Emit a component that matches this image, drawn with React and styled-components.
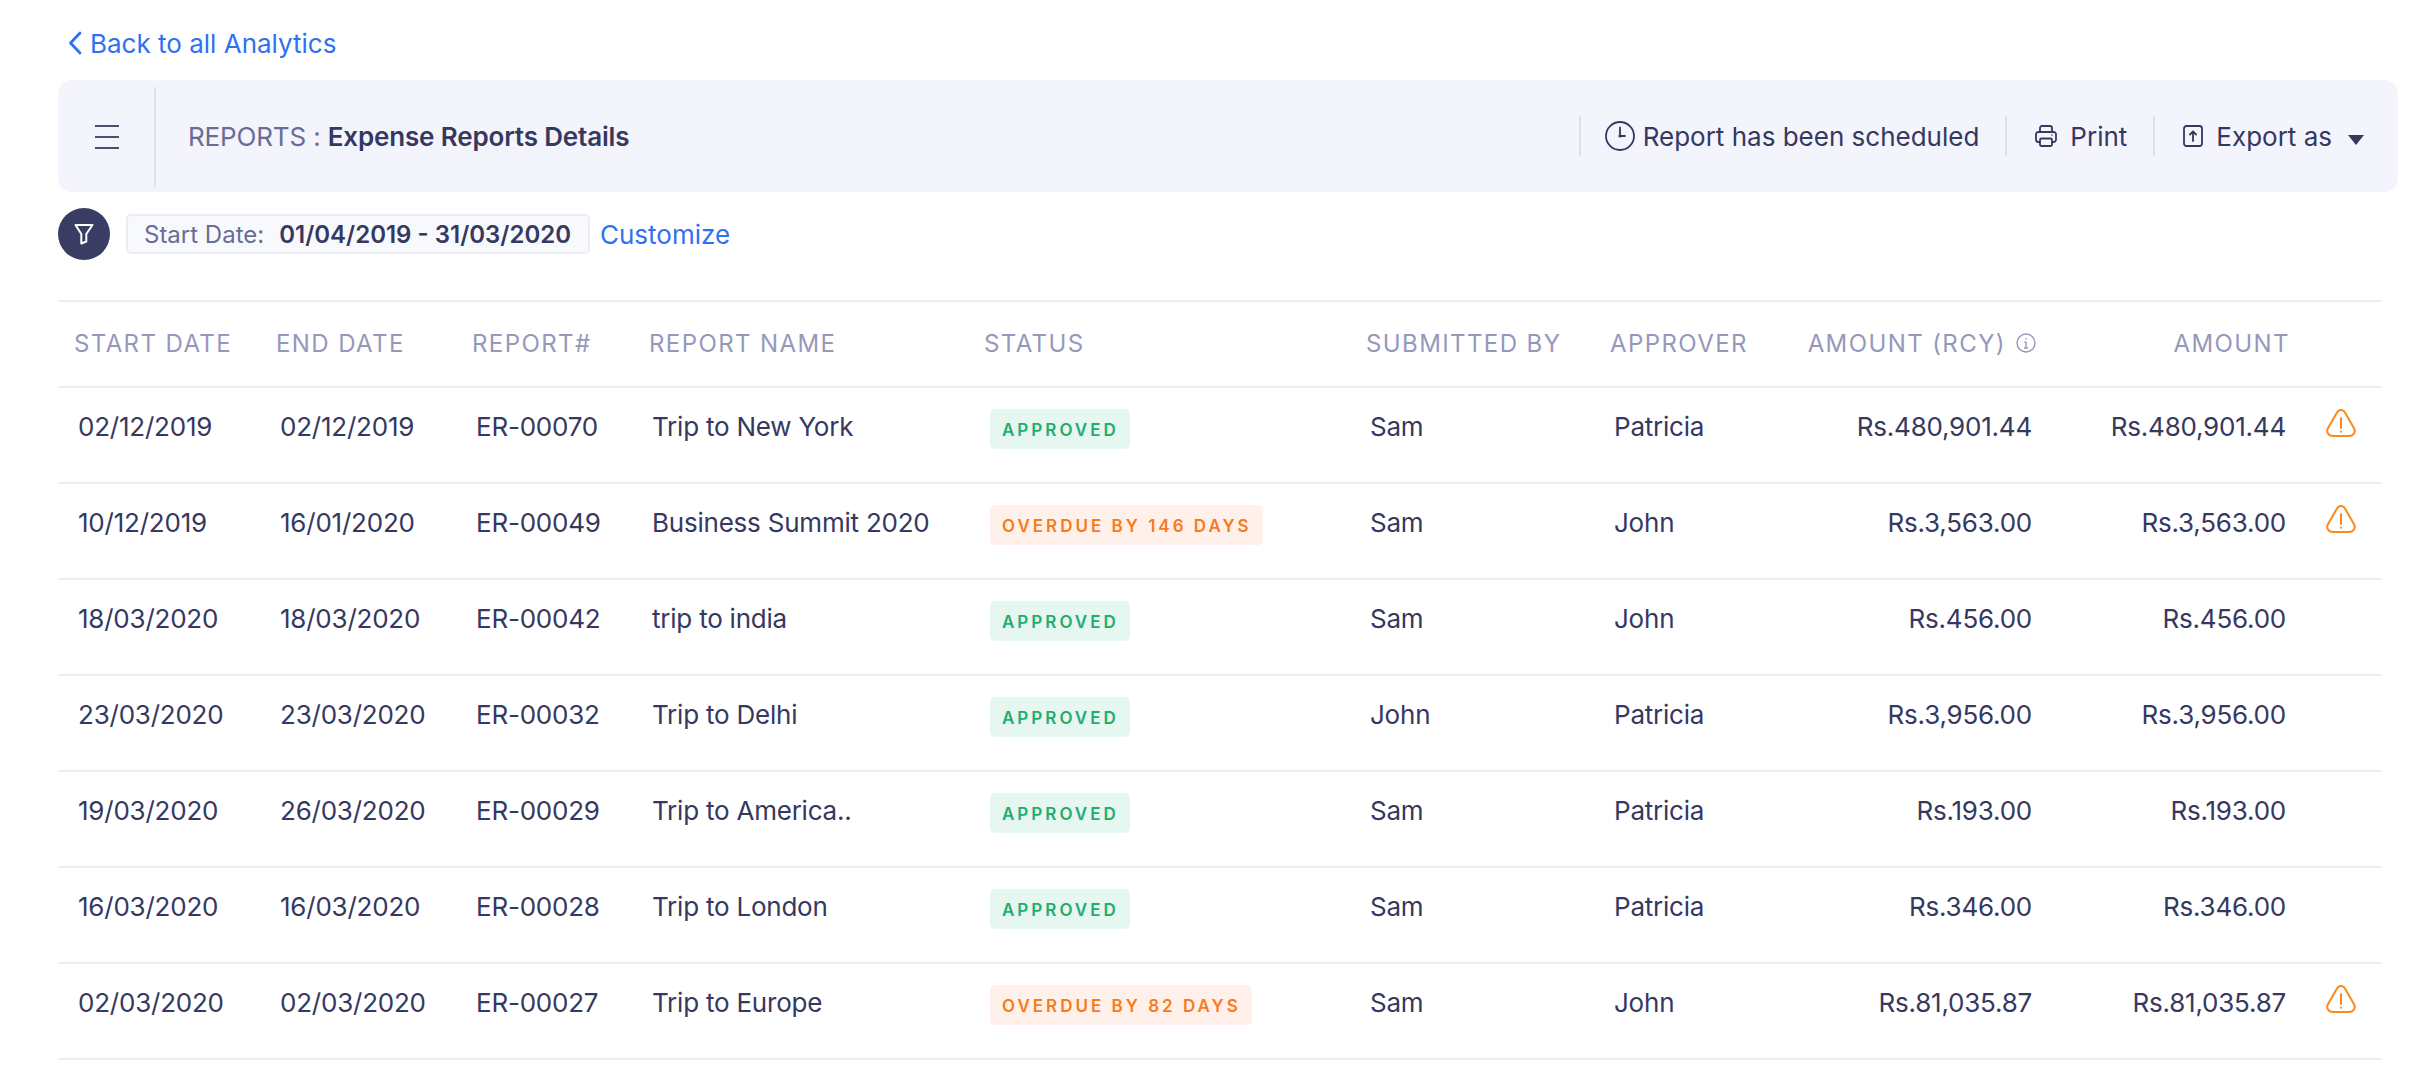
import React from "react";
import styled, { createGlobalStyle } from "styled-components";

const GlobalStyle = createGlobalStyle`
  html, body {
    margin: 0;
    background: #fff;
    font-family: Inter, "Liberation Sans", sans-serif;
    color: #35385f;
  }
`;

const Page = styled.div`
  width: 2434px;
  height: 1074px;
  box-sizing: border-box;
  overflow: hidden;
  padding: 24px 52px 0 58px;
  font-size: 26px;
`;

const BackLink = styled.a`
  display: flex;
  align-items: center;
  gap: 8px;
  height: 38px;
  margin-bottom: 18px;
  padding-left: 10px;
  color: #2f71f0;
`;

const Banner = styled.div`
  display: flex;
  align-items: center;
  height: 112px;
  background: #f3f4fc;
  border-radius: 14px;
  margin-right: -16px;
  padding: 0 26px 0 37px;
`;

const MenuButton = styled.div`
  display: flex;
  align-items: center;
  align-self: stretch;
  width: 59px;
  margin: 7px 0 5px;
  border-right: 2px solid #dfe1ee;
`;

const Title = styled.div`
  flex: 1;
  padding-left: 32px;
  letter-spacing: -0.15px;
  color: #696d95;
  strong {
    font-weight: 600;
    color: #35385f;
  }
`;

const Tool = styled.div`
  display: flex;
  align-items: center;
  gap: ${(p) => p.$gap}px;
  height: 40px;
  padding: 0 ${(p) => p.$end}px 0 ${(p) => p.$start}px;
  border-left: 2px solid #dfe1ee;
`;

const Caret = styled.span`
  width: 0;
  height: 0;
  margin: 8px 0 0 3px;
  border-style: solid;
  border-width: 10px 8px 0;
  border-color: #35385f transparent transparent;
`;

const FilterBar = styled.div`
  display: flex;
  align-items: center;
  height: 52px;
  margin-top: 16px;
`;

const FilterIcon = styled.div`
  display: flex;
  align-items: center;
  justify-content: center;
  width: 52px;
  height: 52px;
  border-radius: 50%;
  background: #3a3d63;
`;

const DateChip = styled.div`
  display: flex;
  align-items: center;
  box-sizing: border-box;
  height: 40px;
  margin: 0 10px 0 16px;
  padding: 0 17px 0 16px;
  background: #f8f9fc;
  border: 2px solid #ebecf5;
  border-radius: 5px;
  font-size: 24px;
  color: #696d95;
  strong {
    margin-left: 15px;
    font-weight: 600;
    color: #35385f;
  }
`;

const Customize = styled.a`
  color: #2f71f0;
`;

const Table = styled.table`
  width: 2324px;
  margin-top: 40px;
  table-layout: fixed;
  border-collapse: collapse;
  border-top: 2px solid #ededf8;
`;

const Th = styled.th`
  height: 86px;
  padding: 0 ${(p) => (p.$right ? "10px" : "0")} 2px ${(p) => (p.$right ? "0" : "16px")};
  border-bottom: 2px solid #ededf8;
  text-align: ${(p) => (p.$right ? "right" : "left")};
  font-size: 24px;
  font-weight: 400;
  letter-spacing: 1.4px;
  color: #9698bb;
  white-space: nowrap;
  box-sizing: border-box;
`;

const Td = styled.td`
  height: 96px;
  box-sizing: border-box;
  padding: 21px ${(p) => (p.$right ? "14px" : "0")} 0 ${(p) => (p.$right ? "0" : p.$left || "20px")};
  border-bottom: 2px solid #ededf8;
  text-align: ${(p) => (p.$right ? "right" : "left")};
  vertical-align: top;
  line-height: 36px;
  letter-spacing: -0.22px;
  white-space: nowrap;
`;

const Badge = styled.span`
  display: inline-block;
  height: 40px;
  box-sizing: border-box;
  padding: 0 11px 0 12px;
  border-radius: 5px;
  font-size: 17px;
  font-weight: 600;
  line-height: 42px;
  letter-spacing: 3px;
  background: ${(p) => (p.$overdue ? "#fff1e9" : "#e5f7f0")};
  color: ${(p) => (p.$overdue ? "#f97a1d" : "#23ad6d")};
`;

const ChevronLeft = () => (
  <svg width="14" height="24" viewBox="0 0 14 24" fill="none" stroke="#2f71f0" strokeWidth="2.8" strokeLinecap="round" strokeLinejoin="round">
    <path d="M12 2 2.500 12 12 22" />
  </svg>
);

const MenuIcon = () => (
  <svg width="24" height="26" viewBox="0 0 24 26" stroke="#4c4f74" strokeWidth="2">
    <path d="M0 2h24M0 13h24M0 24h24" />
  </svg>
);

const ClockIcon = () => (
  <svg width="30" height="30" viewBox="0 0 30 30" fill="none" stroke="#35385f" strokeWidth="1.8" strokeLinecap="round">
    <circle cx="15" cy="15" r="14" />
    <path d="M15 6.500V15h5" />
    <circle cx="15" cy="15" r="1.600" fill="#35385f" stroke="none" />
  </svg>
);

const PrintIcon = () => (
  <svg width="22" height="22" viewBox="0 0 22 22" fill="none" stroke="#35385f" strokeWidth="1.8" strokeLinejoin="round">
    <path d="M5 7V3a2 2 0 0 1 2-2h8a2 2 0 0 1 2 2v4" />
    <path d="M5 17H3.500A2.500 2.500 0 0 1 1 14.500V9.500A2.500 2.500 0 0 1 3.500 7h15A2.500 2.500 0 0 1 21 9.500v5a2.500 2.500 0 0 1-2.500 2.500H17" />
    <rect x="5" y="13.500" width="12" height="7.500" rx="1.500" />
    <path d="M16.500 10h.8" />
  </svg>
);

const ExportIcon = () => (
  <svg width="20" height="22" viewBox="0 0 20 22" fill="none" stroke="#35385f" strokeWidth="1.8" strokeLinecap="round" strokeLinejoin="round">
    <rect x="1" y="1" width="18" height="20" rx="2.500" />
    <path d="M10 16V6.500M7 9.500l3-3 3 3" />
  </svg>
);

const FunnelIcon = () => (
  <svg width="20" height="22" viewBox="0 0 20 22" fill="none" stroke="#fff" strokeWidth="2" strokeLinejoin="round">
    <path d="M1.500 2h17l-6.200 9v7.500l-5 2V11z" />
  </svg>
);

const InfoIcon = () => (
  <svg width="20" height="20" viewBox="0 0 20 20" fill="none" stroke="#9698bb" strokeWidth="1.4" style={{ margin: "0 0 4px 10px", verticalAlign: "middle" }}>
    <circle cx="10" cy="10" r="9" />
    <path d="M10 9v6M8 15h4M8.400 9H10" />
    <path d="M10 5.200v1" strokeWidth="2" />
  </svg>
);

const WarningIcon = () => (
  <svg width="30" height="28" viewBox="0 0 30 28" fill="none" stroke="#f98a1d" strokeWidth="2" strokeLinecap="round" strokeLinejoin="round">
    <path d="M11 3.500c1.800-3.300 6.200-3.300 8 0l8.800 15.300C30.200 23 27.500 27 23 27H7C2.500 27-.2 23 2.200 18.800z" />
    <path d="M15 9v10M15 22.500v.3" />
  </svg>
);

const columns = [202, 196, 177, 335, 382, 244, 186, 266, 254, 82];

const rows = [
  ["02/12/2019", "02/12/2019", "ER-00070", "Trip to New York", "APPROVED", "Sam", "Patricia", "Rs.480,901.44", true],
  ["10/12/2019", "16/01/2020", "ER-00049", "Business Summit 2020", "OVERDUE BY 146 DAYS", "Sam", "John", "Rs.3,563.00", true],
  ["18/03/2020", "18/03/2020", "ER-00042", "trip to india", "APPROVED", "Sam", "John", "Rs.456.00", false],
  ["23/03/2020", "23/03/2020", "ER-00032", "Trip to Delhi", "APPROVED", "John", "Patricia", "Rs.3,956.00", false],
  ["19/03/2020", "26/03/2020", "ER-00029", "Trip to America..", "APPROVED", "Sam", "Patricia", "Rs.193.00", false],
  ["16/03/2020", "16/03/2020", "ER-00028", "Trip to London", "APPROVED", "Sam", "Patricia", "Rs.346.00", false],
  ["02/03/2020", "02/03/2020", "ER-00027", "Trip to Europe", "OVERDUE BY 82 DAYS", "Sam", "John", "Rs.81,035.87", true],
];

export default function App() {
  return (
    <Page>
      <GlobalStyle />
      <BackLink>
        <ChevronLeft />
        Back to all Analytics
      </BackLink>
      <Banner>
        <MenuButton>
          <MenuIcon />
        </MenuButton>
        <Title>
          REPORTS : <strong>Expense Reports Details</strong>
        </Title>
        <Tool $start={24} $end={26} $gap={8}>
          <ClockIcon />
          Report has been scheduled
        </Tool>
        <Tool $start={28} $end={26} $gap={13}>
          <PrintIcon />
          Print
        </Tool>
        <Tool $start={28} $end={8} $gap={13}>
          <ExportIcon />
          Export as
          <Caret />
        </Tool>
      </Banner>
      <FilterBar>
        <FilterIcon>
          <FunnelIcon />
        </FilterIcon>
        <DateChip>
          Start Date: <strong>01/04/2019 - 31/03/2020</strong>
        </DateChip>
        <Customize>Customize</Customize>
      </FilterBar>
      <Table>
        <colgroup>
          {columns.map((w, i) => (
            <col key={i} width={w} />
          ))}
        </colgroup>
        <thead>
          <tr>
            <Th>START DATE</Th>
            <Th>END DATE</Th>
            <Th>REPORT#</Th>
            <Th>REPORT NAME</Th>
            <Th>STATUS</Th>
            <Th>SUBMITTED BY</Th>
            <Th>APPROVER</Th>
            <Th $right>
              AMOUNT (RCY)
              <InfoIcon />
            </Th>
            <Th $right>AMOUNT</Th>
            <Th />
          </tr>
        </thead>
        <tbody>
          {rows.map((r) => (
            <tr key={r[2]}>
              <Td>{r[0]}</Td>
              <Td>{r[1]}</Td>
              <Td>{r[2]}</Td>
              <Td $left="19px">{r[3]}</Td>
              <Td $left="22px">
                <Badge $overdue={r[4] !== "APPROVED"}>{r[4]}</Badge>
              </Td>
              <Td>{r[5]}</Td>
              <Td>{r[6]}</Td>
              <Td $right>{r[7]}</Td>
              <Td $right>{r[7]}</Td>
              <Td $left="26px">{r[8] && <WarningIcon />}</Td>
            </tr>
          ))}
        </tbody>
      </Table>
    </Page>
  );
}
